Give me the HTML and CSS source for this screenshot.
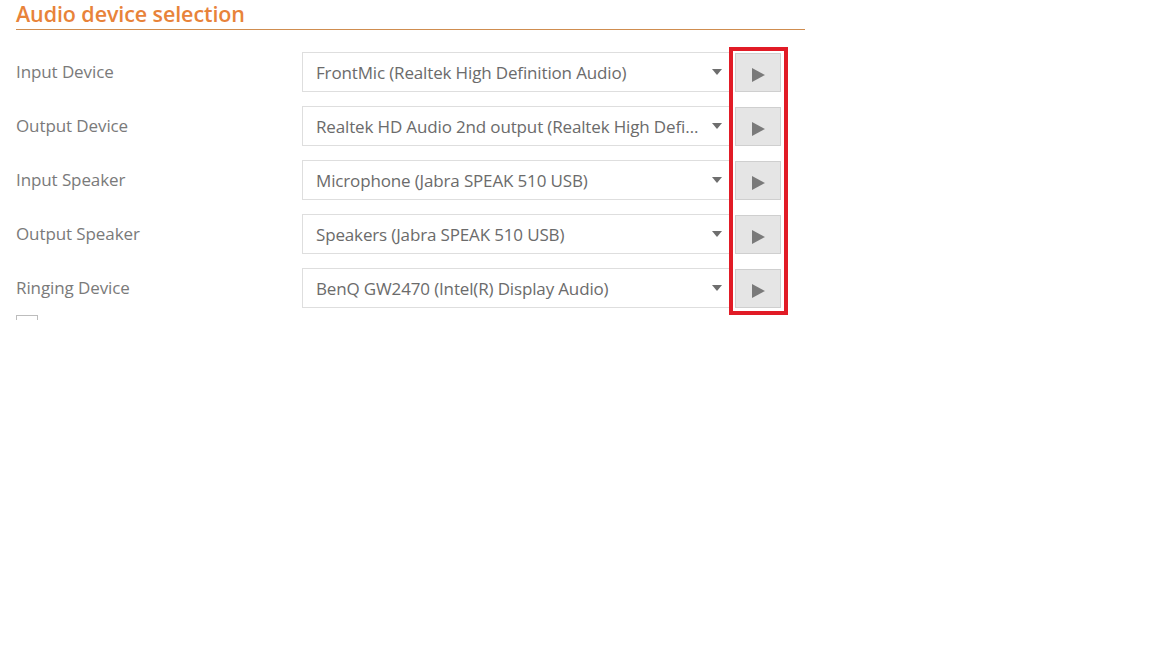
FILE: index.html
```html
<!DOCTYPE html>
<html>
<head>
<meta charset="utf-8">
<link rel="stylesheet" href="styles.css">
</head>
<body>
<div class="page">
  <h1 class="title">Audio device selection</h1>
  <div class="rows">
    <div class="row">
      <div class="label">Input Device</div>
      <div class="select"><span class="value">FrontMic (Realtek High Definition Audio)</span><span class="caret"></span></div>
      <div class="play"><span class="tri"></span></div>
    </div>
    <div class="row">
      <div class="label">Output Device</div>
      <div class="select"><span class="value">Realtek HD Audio 2nd output (Realtek High Definition Audio)</span><span class="caret"></span></div>
      <div class="play"><span class="tri"></span></div>
    </div>
    <div class="row">
      <div class="label">Input Speaker</div>
      <div class="select"><span class="value">Microphone (Jabra SPEAK 510 USB)</span><span class="caret"></span></div>
      <div class="play"><span class="tri"></span></div>
    </div>
    <div class="row">
      <div class="label">Output Speaker</div>
      <div class="select"><span class="value">Speakers (Jabra SPEAK 510 USB)</span><span class="caret"></span></div>
      <div class="play"><span class="tri"></span></div>
    </div>
    <div class="row">
      <div class="label">Ringing Device</div>
      <div class="select"><span class="value">BenQ GW2470 (Intel(R) Display Audio)</span><span class="caret"></span></div>
      <div class="play"><span class="tri"></span></div>
    </div>
  </div>
  <div class="check-clip"><div class="check"></div></div>
  <div class="highlight"></div>
</div>
</body>
</html>
```
FILE: styles.css
```css
html, body {
  margin: 0;
  padding: 0;
  background: #fff;
}
.page {
  position: relative;
  padding: 0 0 0 16px;
  font-family: "Open Sans", "Noto Sans", sans-serif;
}
.title {
  margin: 0;
  width: 789px;
  height: 30px;
  box-sizing: border-box;
  font-size: 21.5px;
  line-height: 27px;
  font-weight: 600;
  color: #e8833a;
  border-bottom: 1px solid #cf8d50;
  letter-spacing: -0.1px;
}
.rows {
  display: flex;
  flex-direction: column;
  gap: 14px;
  padding-top: 22px;
}
.row {
  display: flex;
  height: 40px;
}
.label {
  width: 286px;
  font-size: 17px;
  line-height: 40px;
  color: #7a7a7a;
  letter-spacing: -0.1px;
}
.select {
  width: 431px;
  height: 40px;
  box-sizing: border-box;
  border: 1px solid #dedede;
  display: flex;
  align-items: center;
  padding: 0 9px 0 13px;
  font-size: 17px;
  color: #6b6b6b;
  letter-spacing: -0.15px;
}
.value {
  flex: 1;
  white-space: nowrap;
  overflow: hidden;
  text-overflow: ellipsis;
}
.caret {
  width: 0;
  height: 0;
  border-left: 5px solid transparent;
  border-right: 5px solid transparent;
  border-top: 6px solid #6e6e6e;
  margin-left: 5px;
  margin-right: 1px;
}
.play {
  margin-top: 1px;
  margin-left: 2px;
  width: 46px;
  height: 39px;
  box-sizing: border-box;
  background: #e5e5e5;
  border: 1px solid #cfcfcf;
  display: flex;
  align-items: center;
  justify-content: center;
}
.tri {
  width: 0;
  height: 0;
  border-top: 7px solid transparent;
  border-bottom: 7px solid transparent;
  border-left: 13px solid #7a7a7a;
  margin-top: 4px;
}
.check-clip {
  height: 5px;
  overflow: hidden;
  margin-top: 7px;
}
.check {
  width: 22px;
  height: 22px;
  border: 1px solid #bdbdbd;
  box-sizing: border-box;
}
.highlight {
  position: absolute;
  left: 729px;
  top: 47px;
  width: 59px;
  height: 268px;
  box-sizing: border-box;
  border: 4px solid #e11b26;
}
```
